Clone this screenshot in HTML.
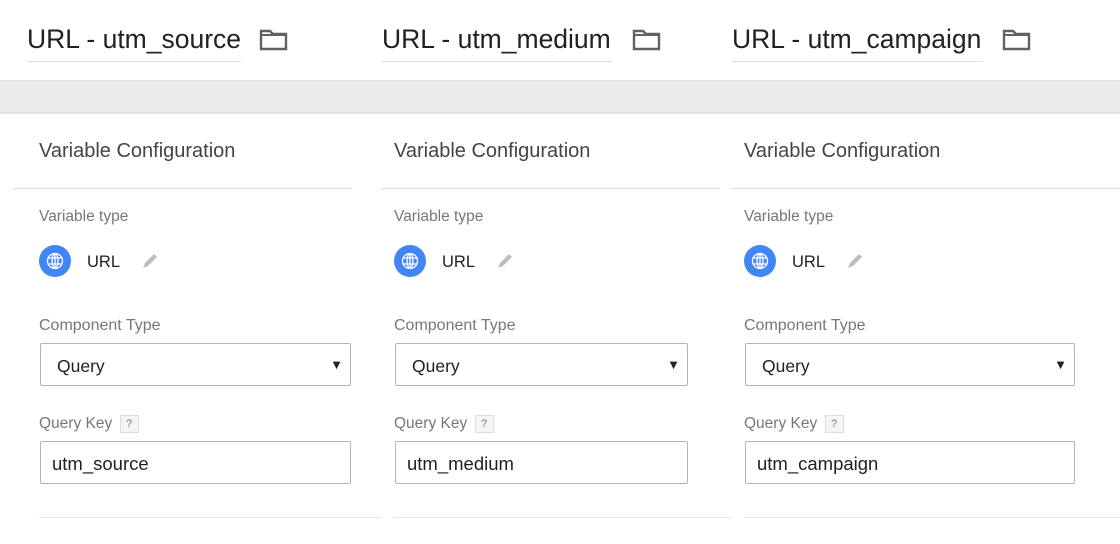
<!DOCTYPE html>
<html><head><meta charset="utf-8"><style>
body{margin:0;width:1120px;height:544px;position:relative;overflow:hidden;background:#fff;font-family:"Liberation Sans",sans-serif;color:#212121}
.a{position:absolute}
.t{font-size:26.5px;color:#212121;white-space:nowrap}
.ul{height:1px;background:#ddd}
.vc{font-size:20px;color:#444}
.lab{font-size:15.5px;color:#777}
.box{border:1px solid #b5b5b5;border-radius:2px;box-sizing:border-box;height:43px;font-size:17.5px;color:#212121}
.hl{height:1px;background:#ddd}
.in{font-size:18.5px}
</style></head><body>
<div class="a" style="left:0;top:80px;width:1120px;height:1px;background:#ddd"></div>
<div class="a" style="left:0;top:81px;width:1120px;height:32px;background:#ebebeb"></div>
<div class="a" style="left:0;top:112px;width:1120px;height:2px;background:#e2e2e2"></div>

<div class="a t" style="left:27px;top:24px">URL - utm_source</div>
<div class="a ul" style="left:27px;top:61px;width:214px"></div>
<div class="a t" style="left:382px;top:24px">URL - utm_medium</div>
<div class="a ul" style="left:382px;top:61px;width:230px"></div>
<div class="a t" style="left:732px;top:24px">URL - utm_campaign</div>
<div class="a ul" style="left:732px;top:61px;width:251px"></div>

<svg class="a" style="left:259px;top:28px" width="30" height="24" viewBox="0 0 30 24"><path d="M2 3h9l3 3h13v15H2z" fill="none" stroke="#616161" stroke-width="2.4"/><path d="M2 7h25" stroke="#616161" stroke-width="2"/></svg>
<svg class="a" style="left:632px;top:28px" width="30" height="24" viewBox="0 0 30 24"><path d="M2 3h9l3 3h13v15H2z" fill="none" stroke="#616161" stroke-width="2.4"/><path d="M2 7h25" stroke="#616161" stroke-width="2"/></svg>
<svg class="a" style="left:1002px;top:28px" width="30" height="24" viewBox="0 0 30 24"><path d="M2 3h9l3 3h13v15H2z" fill="none" stroke="#616161" stroke-width="2.4"/><path d="M2 7h25" stroke="#616161" stroke-width="2"/></svg>

<div class="a vc" style="left:39px;top:140px">Variable Configuration</div>
<div class="a vc" style="left:394px;top:140px">Variable Configuration</div>
<div class="a vc" style="left:744px;top:140px">Variable Configuration</div>
<div class="a hl" style="left:13px;top:188px;width:339px"></div>
<div class="a hl" style="left:381px;top:188px;width:339px"></div>
<div class="a hl" style="left:731px;top:188px;width:389px"></div>

<div class="a lab" style="left:39px;top:208px">Variable type</div>
<div class="a lab" style="left:394px;top:208px">Variable type</div>
<div class="a lab" style="left:744px;top:208px">Variable type</div>

<svg class="a" style="left:39px;top:245px" width="130" height="33"><circle cx="16" cy="16" r="16" fill="#4285f4"/><g fill="none" stroke="#fff" stroke-width="1.3"><circle cx="16" cy="16" r="7.5"/><ellipse cx="16" cy="16" rx="3" ry="7.5"/><path d="M8.5 13h15M8.5 19h15M16 8.5v15"/></g><text x="48" y="22" font-family="Liberation Sans" font-size="16.5" fill="#212121">URL</text><path d="M104 23l2-5 9-9 3 3-9 9z" fill="#bdbdbd"/></svg>
<svg class="a" style="left:394px;top:245px" width="130" height="33"><circle cx="16" cy="16" r="16" fill="#4285f4"/><g fill="none" stroke="#fff" stroke-width="1.3"><circle cx="16" cy="16" r="7.5"/><ellipse cx="16" cy="16" rx="3" ry="7.5"/><path d="M8.5 13h15M8.5 19h15M16 8.5v15"/></g><text x="48" y="22" font-family="Liberation Sans" font-size="16.5" fill="#212121">URL</text><path d="M104 23l2-5 9-9 3 3-9 9z" fill="#bdbdbd"/></svg>
<svg class="a" style="left:744px;top:245px" width="130" height="33"><circle cx="16" cy="16" r="16" fill="#4285f4"/><g fill="none" stroke="#fff" stroke-width="1.3"><circle cx="16" cy="16" r="7.5"/><ellipse cx="16" cy="16" rx="3" ry="7.5"/><path d="M8.5 13h15M8.5 19h15M16 8.5v15"/></g><text x="48" y="22" font-family="Liberation Sans" font-size="16.5" fill="#212121">URL</text><path d="M104 23l2-5 9-9 3 3-9 9z" fill="#bdbdbd"/></svg>

<div class="a lab" style="left:39px;top:317px;font-size:16px">Component Type</div>
<div class="a lab" style="left:394px;top:317px;font-size:16px">Component Type</div>
<div class="a lab" style="left:744px;top:317px;font-size:16px">Component Type</div>

<div class="a box" style="left:40px;top:343px;width:311px;padding:12px 0 0 16px">Query<span class="a" style="right:7px;top:13px;font-size:13px">▼</span></div>
<div class="a box" style="left:395px;top:343px;width:293px;padding:12px 0 0 16px">Query<span class="a" style="right:7px;top:13px;font-size:13px">▼</span></div>
<div class="a box" style="left:745px;top:343px;width:330px;padding:12px 0 0 16px">Query<span class="a" style="right:7px;top:13px;font-size:13px">▼</span></div>

<div class="a lab" style="left:39px;top:415px;font-size:15.5px">Query Key <span style="display:inline-block;width:17px;height:16px;border:1px solid #ddd;background:#f5f5f5;font-size:11px;text-align:center;line-height:16px;margin-left:3px;vertical-align:1px">?</span></div>
<div class="a lab" style="left:394px;top:415px;font-size:15.5px">Query Key <span style="display:inline-block;width:17px;height:16px;border:1px solid #ddd;background:#f5f5f5;font-size:11px;text-align:center;line-height:16px;margin-left:3px;vertical-align:1px">?</span></div>
<div class="a lab" style="left:744px;top:415px;font-size:15.5px">Query Key <span style="display:inline-block;width:17px;height:16px;border:1px solid #ddd;background:#f5f5f5;font-size:11px;text-align:center;line-height:16px;margin-left:3px;vertical-align:1px">?</span></div>

<div class="a box in" style="left:40px;top:441px;width:311px;padding:11px 0 0 11px">utm_source</div>
<div class="a box in" style="left:395px;top:441px;width:293px;padding:11px 0 0 11px">utm_medium</div>
<div class="a box in" style="left:745px;top:441px;width:330px;padding:11px 0 0 11px">utm_campaign</div>

<div class="a hl" style="left:39px;top:517px;width:342px;background:#e6e6e6"></div>
<div class="a hl" style="left:394px;top:517px;width:337px;background:#e6e6e6"></div>
<div class="a hl" style="left:744px;top:517px;width:376px;background:#e6e6e6"></div>
</body></html>
